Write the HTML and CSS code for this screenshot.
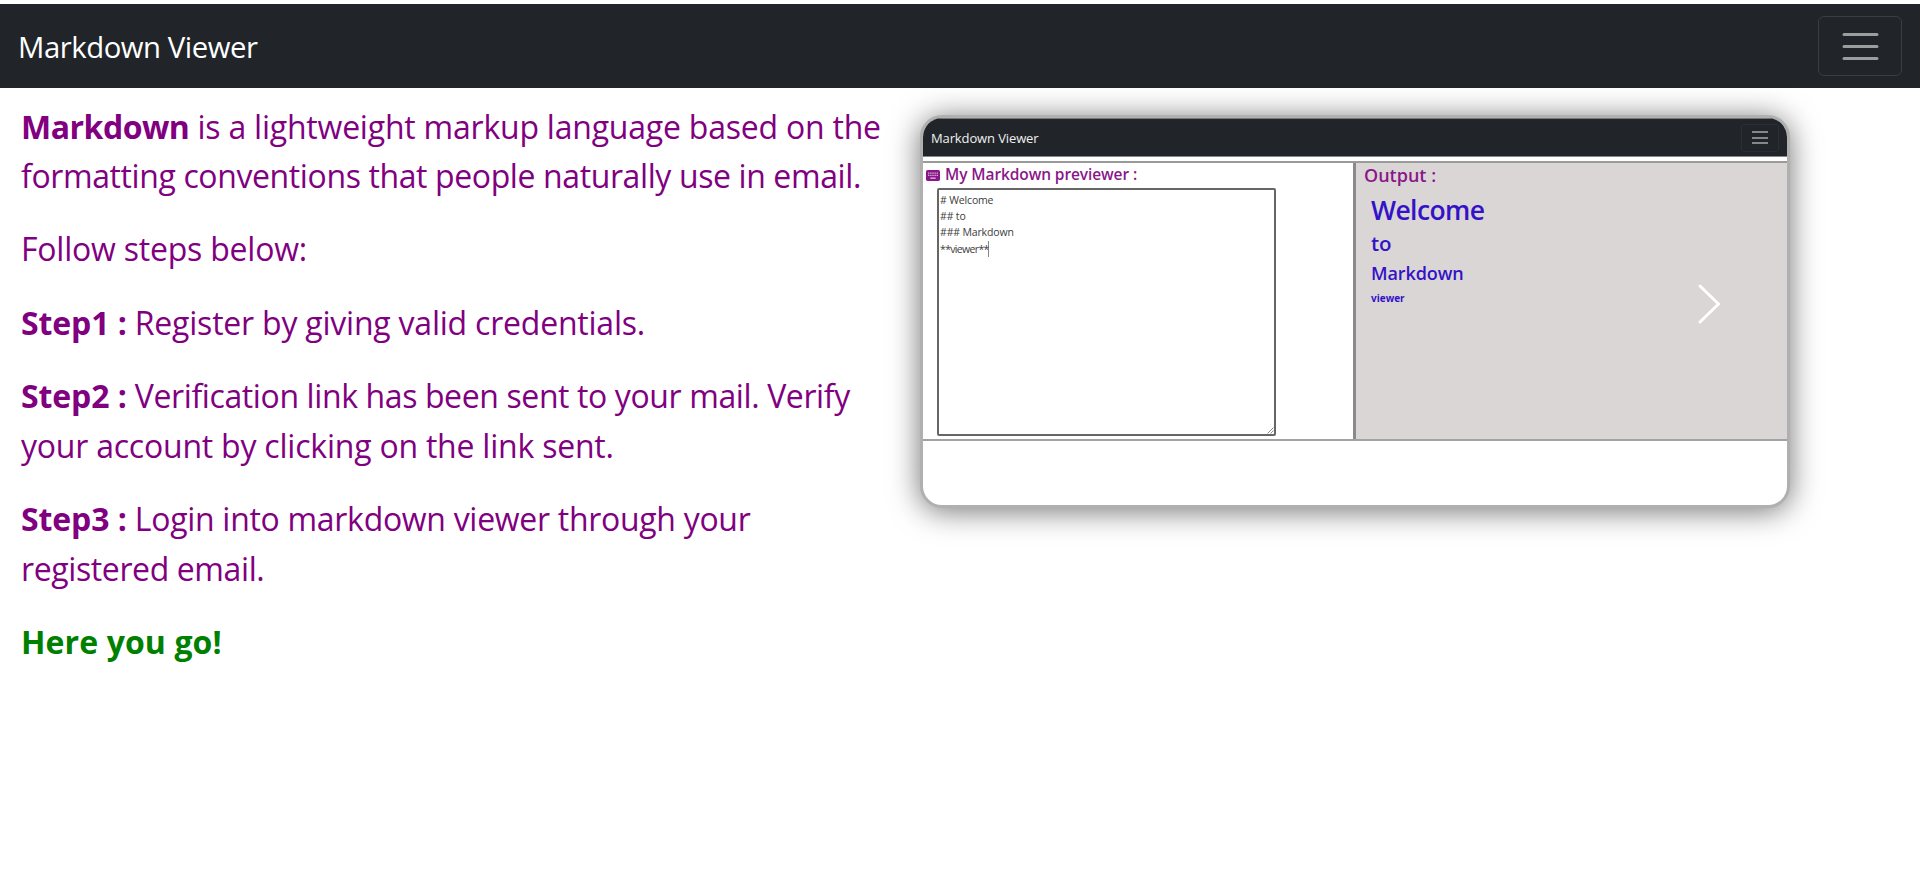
FILE: index.html
```
<!DOCTYPE html>
<html lang="en">
<head>
<meta charset="utf-8">
<title>Markdown Viewer</title>
<link rel="stylesheet" href="styles.css">
</head>
<body>
<nav class="navbar">
  <a class="brand">Markdown Viewer</a>
  <button class="toggler" aria-label="Toggle navigation">
    <svg class="toggler-icon" viewBox="0 0 30 30"><path stroke="currentColor" stroke-linecap="round" stroke-miterlimit="10" stroke-width="2" d="M4 7h22M4 15h22M4 23h22"/></svg>
  </button>
</nav>
<main class="page">
  <section class="intro">
    <p><b class="lead">Markdown</b> is a lightweight markup language based on the<br><span class="snug">formatting conventions that people naturally use in email.</span></p>
    <p>Follow steps below:</p>
    <p><b>Step1 :</b> Register by giving valid credentials.</p>
    <p><b>Step2 :</b> <span class="snug">Verification link has been sent to your mail. Verify</span><br>your account by clicking on the link sent.</p>
    <p><b>Step3 :</b> <span class="mid">Login into markdown viewer through your</span><br><span class="snug">registered email.</span></p>
    <p class="done"><b>Here you go!</b></p>
  </section>
  <section class="carousel">
    <div class="preview">
      <header class="mini-nav">
        <span class="mini-brand">Markdown Viewer</span>
        <span class="mini-toggler"><i></i><i></i><i></i></span>
      </header>
      <div class="panes">
        <div class="pane-input">
          <h2 class="pane-title">
            <svg class="keyboard" viewBox="0 0 26 20"><rect width="26" height="20" rx="3" fill="#8a178a"/><path d="M4 5.5h18M4 9.8h18" stroke="#e6c6e6" stroke-width="2.4" stroke-dasharray="2.2 1.75"/><path d="M8 15h10" stroke="#e6c6e6" stroke-width="2.4"/></svg>
            <span>My Markdown previewer :</span>
          </h2>
          <div class="editor">
            <div># Welcome</div>
            <div>## to</div>
            <div>### Markdown</div>
            <div class="active-line">**viewer**</div>
            <svg class="grip" viewBox="0 0 7 7"><path d="M0.5 6.5l6-6M3.5 6.5l3-3" stroke="#888" fill="none"/></svg>
          </div>
        </div>
        <div class="pane-output">
          <h2 class="output-title">Output :</h2>
          <div class="rendered">
            <div class="r1">Welcome</div>
            <div class="r2">to</div>
            <div class="r3">Markdown</div>
            <div class="r4">viewer</div>
          </div>
        </div>
      </div>
    </div>
    <svg class="next" viewBox="0 0 24 42"><path d="M3 3l18.5 18L3 39" fill="none" stroke="#fff" stroke-width="3" stroke-linecap="round" stroke-linejoin="round"/></svg>
  </section>
</main>
</body>
</html>
```

FILE: styles.css
```
* { box-sizing: border-box; }

body {
  margin: 0;
  padding-top: 4px;
  background: #fff;
  font-family: "Open Sans", "Noto Sans", sans-serif;
  overflow: hidden;
}

.navbar {
  display: flex;
  align-items: center;
  justify-content: space-between;
  height: 84px;
  padding: 0 18px;
  background: #212529;
}

.brand {
  padding-top: 2px;
  color: #fff;
  font-size: 29.3px;
  line-height: 45px;
  letter-spacing: -0.45px;
}

.toggler {
  display: flex;
  align-items: center;
  justify-content: center;
  width: 84px;
  height: 60px;
  padding: 0;
  border: 1px solid #3a3e42;
  border-radius: 6px;
  background: none;
  color: #9b9d9f;
}

.toggler-icon { width: 45px; height: 45px; }

.page { display: flex; }

.intro {
  width: 920px;
  padding: 13.5px 0 0 21px;
  color: purple;
  font-size: 32px;
  line-height: 49.6px;
  letter-spacing: -0.22px;
  white-space: nowrap;
}

.intro p { margin: 0 0 23.8px; }
.intro b { letter-spacing: -0.1px; }
.intro .lead { letter-spacing: -0.5px; }
.intro .snug { letter-spacing: -0.39px; }
.intro .mid { letter-spacing: -0.3px; }
.intro .done { color: green; }
.intro .done b { letter-spacing: 0.1px; }

.carousel {
  position: relative;
  width: 870px;
  padding-top: 27px;
}

.preview {
  height: 393px;
  border: 3px solid #b0b0b0;
  border-radius: 22px;
  background: #fff;
  box-shadow: 0 3px 30px rgba(0, 0, 0, 0.55);
  overflow: hidden;
}

.mini-nav {
  display: flex;
  align-items: center;
  justify-content: space-between;
  height: 39px;
  padding: 0 8px;
  background: #212529;
  border-top: 1px solid #777;
  border-bottom: 1px solid #85878a;
}

.mini-brand {
  color: #f0f0f0;
  font-size: 13px;
  letter-spacing: -0.12px;
}

.mini-toggler {
  display: flex;
  flex-direction: column;
  align-items: center;
  justify-content: center;
  gap: 3.5px;
  width: 38px;
  height: 28px;
  border: 1px solid #2b2f33;
  border-radius: 3px;
}

.mini-toggler i {
  width: 16px;
  height: 2px;
  background: #85888a;
}

.panes {
  display: flex;
  height: 280px;
  margin-top: 4px;
  border-top: 2px solid #9a9a9a;
  border-bottom: 2px solid #a2a2a2;
}

.pane-input { width: 430px; }

.pane-title {
  display: flex;
  gap: 6px;
  height: 25px;
  margin: 0;
  padding-left: 3px;
  color: #8a178a;
  font-size: 15.5px;
  font-weight: 600;
  line-height: 22px;
  letter-spacing: -0.1px;
}

.keyboard { width: 14px; height: 11px; margin: 7px -1px 0 0; }

.editor {
  position: relative;
  width: 339px;
  height: 248px;
  margin-left: 14px;
  padding: 2px 0 0 1px;
  border: 2px solid #666;
  border-radius: 2px;
  color: #3c3c3c;
  font-size: 10.5px;
  line-height: 16.2px;
  letter-spacing: -0.15px;
}

.active-line {
  width: 49px;
  letter-spacing: -0.65px;
  border-right: 1px solid #888;
}

.grip {
  position: absolute;
  right: 0;
  bottom: 0;
  width: 7px;
  height: 7px;
}

.pane-output {
  flex: 1;
  padding-left: 8px;
  border-left: 3px solid #8a8a8a;
  background: #dad6d5;
}

.output-title {
  margin: 0;
  color: #8a178a;
  font-size: 18px;
  font-weight: 600;
  line-height: 25px;
}

.rendered {
  padding-left: 7px;
  color: #3412c8;
  font-weight: 600;
}

.r1 { padding-top: 1px; font-size: 26.5px; line-height: 42px; letter-spacing: -0.6px; }
.r2 { font-size: 20.5px; line-height: 25px; }
.r3 { font-size: 18px; line-height: 34px; letter-spacing: -0.1px; }
.r4 { font-size: 10px; font-weight: 700; line-height: 16px; }

.next {
  position: absolute;
  top: 195px;
  left: 777px;
  width: 24px;
  height: 42px;
}
```
